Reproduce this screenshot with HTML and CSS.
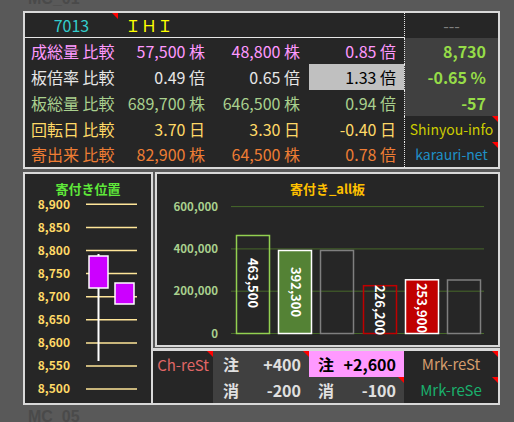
FILE: index.html
```html
<!DOCTYPE html>
<html lang="ja">
<head>
<meta charset="utf-8">
<title>MC</title>
<link rel="stylesheet" href="styles.css">
</head>
<body>
<div class="mc mc-top"><span>MC_01</span></div>

<div class="top-panel">
  <div class="cell head code tri">7013</div>
  <div class="cell head name">ＩＨＩ</div>
  <div class="cell side side-head">---</div>

  <div class="cell label c-pink">成総量 比較</div>
  <div class="cell val v2 c-pink">57,500 株</div>
  <div class="cell val v3 c-pink">48,800 株</div>
  <div class="cell val v4 c-pink">0.85 倍</div>
  <div class="cell side side-num">8,730</div>

  <div class="cell label c-white">板倍率 比較</div>
  <div class="cell val v2 c-white">0.49 倍</div>
  <div class="cell val v3 c-white">0.65 倍</div>
  <div class="cell val v4 hl">1.33 倍</div>
  <div class="cell side side-num">-0.65 %</div>

  <div class="cell label c-green">板総量 比較</div>
  <div class="cell val v2 c-green">689,700 株</div>
  <div class="cell val v3 c-green">646,500 株</div>
  <div class="cell val v4 c-green">0.94 倍</div>
  <div class="cell side side-num">-57</div>

  <div class="cell label c-yellow">回転日 比較</div>
  <div class="cell val v2 c-yellow">3.70 日</div>
  <div class="cell val v3 c-yellow">3.30 日</div>
  <div class="cell val v4 c-yellow">-0.40 日</div>
  <div class="cell side side-link c-olive tri">Shinyou-info</div>

  <div class="cell label c-orange">寄出来 比較</div>
  <div class="cell val v2 c-orange">82,900 株</div>
  <div class="cell val v3 c-orange">64,500 株</div>
  <div class="cell val v4 c-orange">0.78 倍</div>
  <div class="cell side side-link c-blue tri">karauri-net</div>
</div>

<div class="lower">
  <div class="panel left-panel">
    <div class="chart-title t-green">寄付き位置</div>
    <svg class="chart" width="126" height="207" viewBox="0 0 126 207">
      <g transform="translate(0 3)">
        <g class="ylab ylab-yellow" text-anchor="end">
          <text x="45" y="9.6">8,900</text>
          <text x="45" y="32.7">8,850</text>
          <text x="45" y="55.8">8,800</text>
          <text x="45" y="78.9">8,750</text>
          <text x="45" y="102">8,700</text>
          <text x="45" y="125.1">8,650</text>
          <text x="45" y="148.2">8,600</text>
          <text x="45" y="171.3">8,550</text>
          <text x="45" y="194.4">8,500</text>
        </g>
        <g stroke="#ffe699" stroke-width="1.5">
          <line x1="61" x2="112" y1="5.3" y2="5.3"/>
          <line x1="61" x2="112" y1="28.4" y2="28.4"/>
          <line x1="61" x2="112" y1="51.5" y2="51.5"/>
          <line x1="61" x2="112" y1="74.6" y2="74.6"/>
          <line x1="61" x2="112" y1="97.7" y2="97.7"/>
          <line x1="61" x2="112" y1="120.8" y2="120.8"/>
          <line x1="61" x2="112" y1="143.9" y2="143.9"/>
          <line x1="61" x2="112" y1="167" y2="167"/>
          <line x1="61" x2="112" y1="190.1" y2="190.1"/>
        </g>
        <line x1="73.5" x2="73.5" y1="55" y2="162" stroke="#ffffff" stroke-width="2"/>
        <rect x="64" y="57" width="19" height="32" fill="#cc00ff" stroke="#ffffff" stroke-width="1.5"/>
        <rect x="90" y="84" width="19" height="21" fill="#cc00ff" stroke="#ffffff" stroke-width="1.5"/>
      </g>
    </svg>
  </div>

  <div class="right-col">
    <div class="panel chart-panel">
      <div class="chart-title t-gold">寄付き_all板</div>
      <svg class="chart" width="341" height="149" viewBox="0 0 341 149">
        <g transform="translate(0 3)">
          <g stroke="#47692a" stroke-width="1">
            <line x1="74" x2="327" y1="7.6" y2="7.6"/>
            <line x1="74" x2="327" y1="49.9" y2="49.9"/>
            <line x1="74" x2="327" y1="92.2" y2="92.2"/>
            <line x1="74" x2="327" y1="134.5" y2="134.5"/>
          </g>
          <g class="ylab ylab-green" text-anchor="end">
            <text x="61" y="12.2">600,000</text>
            <text x="61" y="54.2">400,000</text>
            <text x="61" y="96.4">200,000</text>
            <text x="61" y="139">0</text>
          </g>
          <rect x="79.5" y="36.5" width="33" height="98" fill="none" stroke="#92d050" stroke-width="1.5"/>
          <rect x="121.5" y="51.5" width="33" height="83" fill="#548235" stroke="#ffffff" stroke-width="1.5"/>
          <rect x="163.5" y="51.5" width="33" height="83" fill="none" stroke="#7f7f7f" stroke-width="1.5"/>
          <rect x="206.5" y="86.7" width="33" height="47.8" fill="none" stroke="#c00000" stroke-width="1.5"/>
          <rect x="248.5" y="80.8" width="33" height="53.7" fill="#c00000" stroke="#ffffff" stroke-width="1.5"/>
          <rect x="290.5" y="81" width="33" height="53.5" fill="none" stroke="#7f7f7f" stroke-width="1.5"/>
          <g class="barlab" text-anchor="middle">
            <text transform="translate(95.5 84) rotate(90)" x="0" y="4.5">463,500</text>
            <text transform="translate(138 93) rotate(90)" x="0" y="4.5">392,300</text>
            <text transform="translate(222.5 111) rotate(90)" x="0" y="4.5">226,200</text>
            <text transform="translate(264.5 109) rotate(90)" x="0" y="4.5">253,900</text>
          </g>
        </g>
      </svg>
    </div>

    <div class="strip">
      <div class="s-cell s-ch tri">Ch-reSt</div>
      <div class="s-cell order o1 tri"><span>注</span><span>+400</span></div>
      <div class="s-cell order o2 pink"><span>注</span><span>+2,600</span></div>
      <div class="s-cell mrk c-tan tri">Mrk-reSt</div>
      <div class="s-cell order o1"><span>消</span><span>-200</span></div>
      <div class="s-cell order o2 tri"><span>消</span><span>-100</span></div>
      <div class="s-cell mrk c-teal tri">Mrk-reSe</div>
    </div>
  </div>
</div>

<div class="mc mc-bottom">MC_05</div>
</body>
</html>
```

FILE: styles.css
```css
* {
  box-sizing: border-box;
}

html,
body {
  margin: 0;
  padding: 0;
}

body {
  width: 514px;
  height: 422px;
  overflow: hidden;
  background: #595959;
  font-family: "Noto Sans CJK JP", "Noto Sans", sans-serif;
}

/* sheet labels */
.mc {
  font-family: "Liberation Sans", Arial, sans-serif;
  font-weight: bold;
  font-size: 16px;
  line-height: 16px;
  color: #4a4a4a;
  padding-left: 28px;
}

.mc-top {
  height: 11px;
  overflow: hidden;
}

.mc-top span {
  display: block;
  margin-top: -9px;
}

.mc-bottom {
  margin-top: 4px;
}

/* top table */
.top-panel {
  margin-left: 23px;
  width: 477px;
  height: 158px;
  border: 2px solid #d9d9d9;
  background: #262626;
  display: grid;
  grid-template-columns: 93px 95px 96px 95px 94px;
  grid-template-rows: 25px 26px 26px 26px 26px 25px;
  font-size: 16px;
}

.cell {
  position: relative;
  display: flex;
  align-items: center;
  white-space: nowrap;
  line-height: 1;
  padding-bottom: 1px;
}

.head {
  border-bottom: 1px solid #e6e6e6;
}

.code {
  justify-content: center;
  color: #33cccc;
}

.name {
  grid-column: span 3;
  padding-left: 7px;
  color: #ffff00;
}

.label {
  padding-left: 6px;
}

.val {
  justify-content: flex-end;
}

.v2 {
  padding-right: 8px;
}

.v3 {
  padding-right: 9px;
}

.v4 {
  padding-right: 8px;
}

.side {
  border-left: 1px dotted #e6e6e6;
  justify-content: flex-end;
  padding-right: 12px;
}

.side-head {
  justify-content: center;
  padding-right: 0;
  color: #808080;
}

.side-num {
  background: #404040;
  color: #96dc48;
  font-weight: bold;
}

.side-link {
  justify-content: center;
  padding-right: 0;
  font-size: 14px;
}

.hl {
  background: #c0c0c0;
  color: #000000;
}

.c-pink { color: #ff99ff; }
.c-white { color: #e6e6e6; }
.c-green { color: #a9d08e; }
.c-yellow { color: #ffd966; }
.c-orange { color: #ee7d34; }
.c-olive { color: #cccc00; }
.c-blue { color: #1f8fc6; }
.c-tan { color: #d49c6c; }
.c-teal { color: #1aaf6c; }

/* red corner markers */
.tri::after {
  content: "";
  position: absolute;
  top: 0;
  right: 0;
  width: 0;
  height: 0;
  border-top: 6px solid #ff0000;
  border-left: 6px solid transparent;
}

/* lower area */
.lower {
  margin-top: 3px;
  margin-left: 23px;
  display: flex;
  height: 233px;
}

.panel {
  border: 2px solid #d9d9d9;
  background: #262626;
}

.left-panel {
  width: 130px;
  height: 233px;
}

.right-col {
  width: 347px;
  display: flex;
  flex-direction: column;
}

.chart-panel {
  margin-left: 2px;
  width: 345px;
  height: 175px;
}

.chart-title {
  margin-top: 8px;
  height: 14px;
  line-height: 14px;
  text-align: center;
  font-size: 13px;
  font-weight: bold;
}

.t-green { color: #5fe83a; }
.t-gold { color: #ffc000; }

.chart {
  display: block;
}

.ylab {
  font-family: "Noto Sans CJK JP", "Noto Sans", sans-serif;
  font-weight: bold;
  font-size: 12px;
}

.ylab-yellow { fill: #ffd966; }
.ylab-green { fill: #a9d08e; font-size: 11.5px; }

.barlab {
  font-family: "Noto Sans CJK JP", "Noto Sans", sans-serif;
  font-weight: bold;
  font-size: 13px;
  fill: #ffffff;
}

/* bottom strip */
.strip {
  margin-top: 1px;
  width: 347px;
  height: 57px;
  border-top: 3px solid #d9d9d9;
  border-right: 2px solid #d9d9d9;
  border-bottom: 2px solid #d9d9d9;
  background: #262626;
  display: grid;
  grid-template-columns: 60px 96px 95px 94px;
  grid-template-rows: 26px 26px;
}

.s-cell {
  position: relative;
  display: flex;
  align-items: center;
  white-space: nowrap;
  line-height: 1;
  padding-bottom: 1px;
}

.s-ch {
  grid-row: span 2;
  align-items: flex-start;
  justify-content: center;
  padding-top: 6px;
  font-size: 15px;
  color: #e06666;
}

.order {
  background: #404040;
  color: #e0e0e0;
  font-size: 16px;
  font-weight: bold;
  justify-content: space-between;
  padding-right: 8px;
}

.o1 {
  padding-left: 10px;
}

.o2 {
  padding-left: 9px;
}

.pink {
  background: #ff99ff;
  color: #000000;
}

.mrk {
  justify-content: center;
  font-size: 15px;
}
```
